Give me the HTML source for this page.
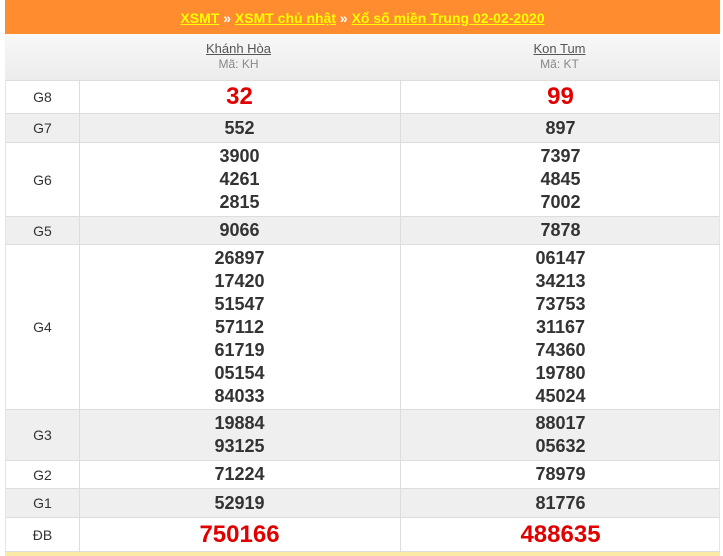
<!DOCTYPE html>
<html><head><meta charset="utf-8"><style>
body{margin:0;width:723px;height:556px;background:#fff;font-family:"Liberation Sans",Arial,sans-serif;position:relative;overflow:hidden}
.bar{position:absolute;left:5px;width:715px;top:0;height:34px;background:#ff8c2e;text-align:center;line-height:36px;font-size:14px;font-weight:bold;color:#fff}
.bar a{color:#ffff00;text-decoration:underline}
.hd{position:absolute;left:5px;width:715px;top:34px;height:46px;background:linear-gradient(#f8f8f8,#ececec);border-bottom:1px solid #ddd}
.hd div{position:absolute;top:7px;text-align:center;width:321px;font-size:13px;line-height:15px}
.hd b{color:#555;font-weight:normal;text-decoration:underline}
.hd span{color:#888;font-size:12px}
.r{position:absolute;left:5px;width:715px;border-bottom:1px solid #ddd;box-sizing:border-box;border-left:1px solid #e4e4e4;border-right:1px solid #e4e4e4}
.g{background:#efefef}
.r .l{position:absolute;left:0;width:73px;top:0;bottom:0;display:flex;align-items:center;justify-content:center;font-size:14px;color:#333;border-right:1px solid #ddd}
.r .c{position:absolute;top:0;bottom:0;width:321px;display:flex;flex-direction:column;align-items:center;justify-content:center;font-size:18px;font-weight:bold;color:#333;line-height:23px}
.r .c1{left:73px;border-right:1px solid #ddd}
.r .c2{left:394px}
.red{color:#e00000!important;font-size:24px!important}
</style></head><body>
<div class="bar"><a>XSMT</a> » <a>XSMT chủ nhật</a> » <a>Xổ số miền Trung 02-02-2020</a></div>
<div class="hd"><div style="left:73px"><b>Khánh Hòa</b><br><span>Mã: KH</span></div><div style="left:394px"><b>Kon Tum</b><br><span>Mã: KT</span></div></div>
<div class="r" style="top:80px;height:34px"><div class="l">G8</div><div class="c c1 red">32</div><div class="c c2 red">99</div></div>
<div class="r g" style="top:114px;height:29px"><div class="l">G7</div><div class="c c1">552</div><div class="c c2">897</div></div>
<div class="r" style="top:143px;height:74px"><div class="l">G6</div><div class="c c1"><div>3900</div><div>4261</div><div>2815</div></div><div class="c c2"><div>7397</div><div>4845</div><div>7002</div></div></div>
<div class="r g" style="top:217px;height:28px"><div class="l">G5</div><div class="c c1">9066</div><div class="c c2">7878</div></div>
<div class="r" style="top:245px;height:165px"><div class="l">G4</div><div class="c c1"><div>26897</div><div>17420</div><div>51547</div><div>57112</div><div>61719</div><div>05154</div><div>84033</div></div><div class="c c2"><div>06147</div><div>34213</div><div>73753</div><div>31167</div><div>74360</div><div>19780</div><div>45024</div></div></div>
<div class="r g" style="top:410px;height:51px"><div class="l">G3</div><div class="c c1"><div>19884</div><div>93125</div></div><div class="c c2"><div>88017</div><div>05632</div></div></div>
<div class="r" style="top:461px;height:28px"><div class="l">G2</div><div class="c c1">71224</div><div class="c c2">78979</div></div>
<div class="r g" style="top:489px;height:29px"><div class="l">G1</div><div class="c c1">52919</div><div class="c c2">81776</div></div>
<div class="r" style="top:518px;height:34px"><div class="l">ĐB</div><div class="c c1 red">750166</div><div class="c c2 red">488635</div></div>
<div style="position:absolute;left:5px;width:715px;top:552px;height:4px;background:#fbe9a6"></div>
</body></html>
